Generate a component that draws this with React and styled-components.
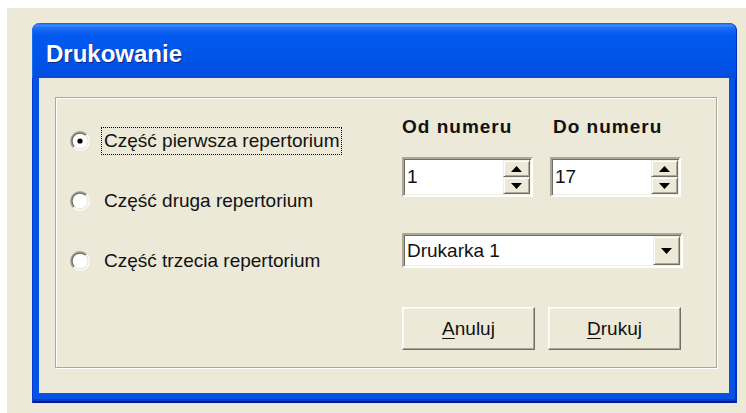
import React from 'react';
import styled, { createGlobalStyle } from 'styled-components';

const GlobalStyle = createGlobalStyle`
  html, body {
    margin: 0;
    padding: 0;
    background: #fff;
  }
  body {
    font-family: "Liberation Sans", Arial, sans-serif;
  }
`;

const Screen = styled.div`
  width: 746px;
  height: 413px;
  box-sizing: border-box;
  padding: 8px 0 0 7px;
  background: #fff;
  overflow: hidden;
`;

const Desk = styled.div`
  height: 100%;
  box-sizing: border-box;
  padding: 15px 0 0 25px;
  background: #ece9d8;
`;

const Window = styled.div`
  width: 705px;
  height: 380px;
  display: flex;
  flex-direction: column;
`;

const TitleBar = styled.div`
  height: 55px;
  box-sizing: border-box;
  padding: 17px 0 0 14px;
  border-radius: 8px 8px 0 0;
  background: linear-gradient(
    to bottom,
    #0a5ae6 0%,
    #3a8df8 4%,
    #1c6ef4 9%,
    #0258ee 22%,
    #0054e8 60%,
    #0050e4 88%,
    #0a4ad8 100%
  );
  box-shadow: inset 1px 0 0 #1c6cf0, inset -1px 0 0 #0032c0;
  color: #fff;
  font-size: 24px;
  font-weight: bold;
  line-height: 28px;
  text-shadow: 1px 1px 0 #0a2a90;
`;

const Frame = styled.div`
  flex: 1;
  display: flex;
  padding: 0 8px 10px 7px;
  background: #0452e6;
  box-shadow: inset 1px 0 0 #0a3cd0, inset -2px 0 0 #0032b8, inset 0 -2px 0 #001c96, inset 0 -4px 0 #0a3ac8;
`;

const Client = styled.div`
  flex: 1;
  display: flex;
  box-sizing: border-box;
  padding: 19px 12px 25px 16px;
  background: #ece9d8;
`;

const GroupBox = styled.div`
  flex: 1;
  display: flex;
  border: 1px solid #aca899;
  box-shadow: inset 1px 1px 0 #fff, 1px 1px 0 #fff;
`;

const Options = styled.div`
  width: 332px;
  padding: 13px 0 0 14px;
  display: flex;
  flex-direction: column;
`;

const OptionRow = styled.div`
  height: 60px;
  display: flex;
  align-items: center;
  gap: 11px;
`;

const OptionLabel = styled.span`
  padding: 2px 2px;
  border: 1px dotted ${p => (p.$focused ? '#000' : 'transparent')};
  font-size: 19px;
  line-height: 22px;
  color: #111;
  white-space: nowrap;
`;

const Settings = styled.div`
  padding-top: 18px;
  display: grid;
  grid-template-columns: 131px 131px;
  column-gap: 17px;
  align-content: start;
`;

const FieldCaption = styled.div`
  padding-left: ${p => p.$shift || 0}px;
  font-size: 19px;
  font-weight: bold;
  line-height: 22px;
  letter-spacing: 1px;
  color: #111;
`;

const Sunken = styled.div`
  box-sizing: border-box;
  display: flex;
  align-items: stretch;
  background: #fff;
  border-style: solid;
  border-width: 2px;
  border-color: #aca899 #fff #fff #aca899;
  box-shadow: inset 1px 1px 0 #716f64, inset -1px -1px 0 #f1efe2;
`;

const SpinBox = styled(Sunken)`
  margin-top: 19px;
  height: 40px;
`;

const ComboBox = styled(Sunken)`
  grid-column: 1 / span 2;
  margin-top: 36px;
  height: 35px;
  width: 281px;
`;

const FieldText = styled.div`
  flex: 1;
  display: flex;
  align-items: center;
  padding-left: 3px;
  font-size: 19px;
  color: #111;
`;

const Raised = styled.div`
  box-sizing: border-box;
  display: flex;
  align-items: center;
  justify-content: center;
  background: #ece9d8;
  border-style: solid;
  border-width: 1px;
  border-color: #f1efe2 #716f64 #716f64 #f1efe2;
  box-shadow: inset 1px 1px 0 #fff, inset -1px -1px 0 #aca899;
`;

const SpinButtons = styled.div`
  width: 27px;
  margin: 1px 1px 1px 0;
  display: flex;
  flex-direction: column;
`;

const SpinHalf = styled(Raised)`
  flex: 1;
`;

const DropButton = styled(Raised)`
  width: 27px;
  margin: 1px 1px 1px 0;
`;

const ButtonRow = styled.div`
  grid-column: 1 / span 2;
  margin-top: 39px;
  display: flex;
  gap: 13px;
`;

const PushButton = styled.button`
  width: 135px;
  height: 43px;
  padding: 0;
  background: #ece9d8;
  border-style: solid;
  border-width: 1px;
  border-color: #fff #716f64 #716f64 #fff;
  box-shadow: inset -1px -1px 0 #aca899, inset 1px 1px 0 #f7f6f0;
  font-family: "Liberation Sans", Arial, sans-serif;
  font-size: 19px;
  color: #111;
  cursor: pointer;

  u {
    text-decoration-thickness: 1px;
    text-underline-offset: 3px;
  }
`;

function RadioMark({ checked }) {
  const arc = r => {
    const d = r * 0.7071;
    return {
      tl: `M ${10 - d} ${10 + d} A ${r} ${r} 0 0 1 ${10 + d} ${10 - d}`,
      br: `M ${10 + d} ${10 - d} A ${r} ${r} 0 0 1 ${10 - d} ${10 + d}`,
    };
  };
  const outer = arc(9.3);
  const inner = arc(8.1);
  return (
    <svg width="20" height="20" viewBox="0 0 20 20">
      <circle cx="10" cy="10" r="8.5" fill="#fff" />
      <path d={outer.tl} fill="none" stroke="#aca899" strokeWidth="1.4" />
      <path d={outer.br} fill="none" stroke="#fff" strokeWidth="1.4" />
      <path d={inner.tl} fill="none" stroke="#6f6d62" strokeWidth="1.4" />
      <path d={inner.br} fill="none" stroke="#ece9d8" strokeWidth="1.4" />
      {checked && <circle cx="10" cy="10" r="2.6" fill="#000" />}
    </svg>
  );
}

const Arrow = ({ up }) => (
  <svg width="11" height="6" viewBox="0 0 11 6">
    <polygon points={up ? '0,6 11,6 5.5,0' : '0,0 11,0 5.5,6'} fill="#000" />
  </svg>
);

function Spinner({ value }) {
  return (
    <SpinBox>
      <FieldText>{value}</FieldText>
      <SpinButtons>
        <SpinHalf><Arrow up /></SpinHalf>
        <SpinHalf><Arrow /></SpinHalf>
      </SpinButtons>
    </SpinBox>
  );
}

const parts = [
  { label: 'Część pierwsza repertorium', checked: true },
  { label: 'Część druga repertorium' },
  { label: 'Część trzecia repertorium' },
];

export default function App() {
  return (
    <Screen>
      <GlobalStyle />
      <Desk>
        <Window>
          <TitleBar>Drukowanie</TitleBar>
          <Frame>
            <Client>
              <GroupBox>
                <Options>
                  {parts.map(p => (
                    <OptionRow key={p.label}>
                      <RadioMark checked={p.checked} />
                      <OptionLabel $focused={p.checked}>{p.label}</OptionLabel>
                    </OptionRow>
                  ))}
                </Options>
                <Settings>
                  <FieldCaption>Od numeru</FieldCaption>
                  <FieldCaption $shift={3}>Do numeru</FieldCaption>
                  <Spinner value="1" />
                  <Spinner value="17" />
                  <ComboBox>
                    <FieldText>Drukarka 1</FieldText>
                    <DropButton><Arrow /></DropButton>
                  </ComboBox>
                  <ButtonRow>
                    <PushButton><u>A</u>nuluj</PushButton>
                    <PushButton><u>D</u>rukuj</PushButton>
                  </ButtonRow>
                </Settings>
              </GroupBox>
            </Client>
          </Frame>
        </Window>
      </Desk>
    </Screen>
  );
}
